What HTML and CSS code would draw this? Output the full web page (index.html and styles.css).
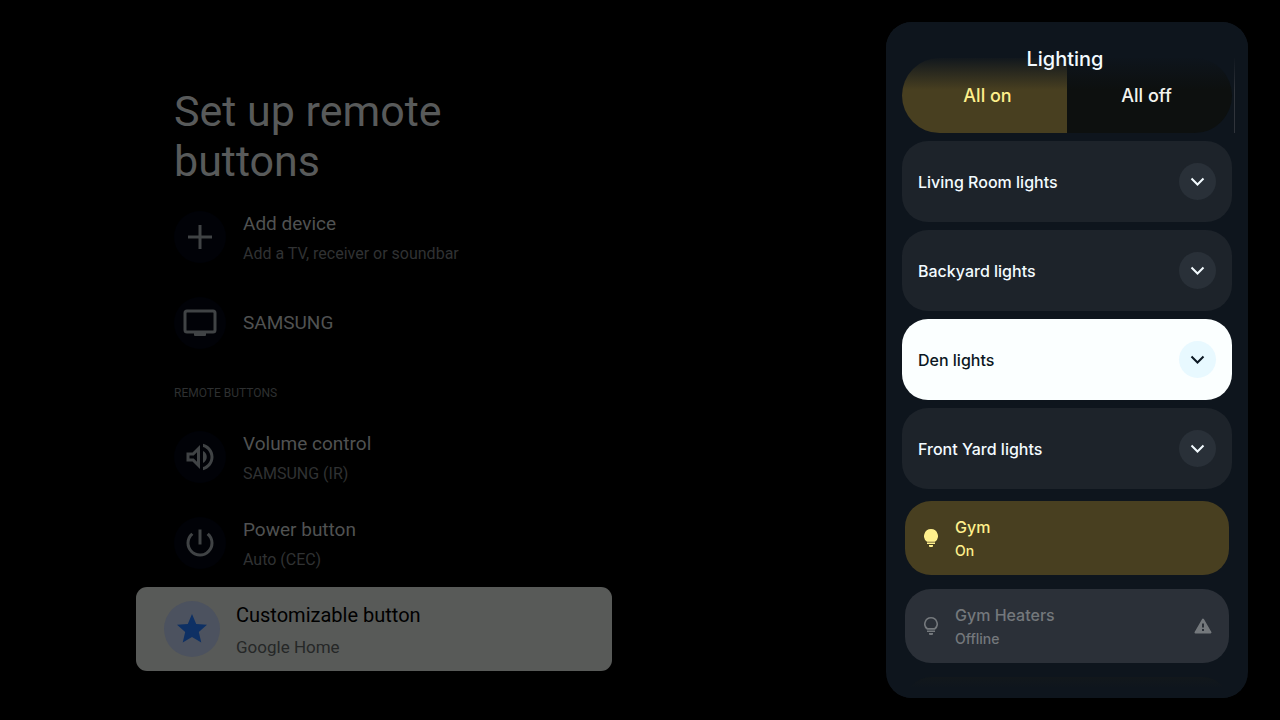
FILE: index.html
```html
<!DOCTYPE html>
<html lang="en">
<head>
    <meta charset="UTF-8">
    <meta name="viewport" content="width=device-width, initial-scale=1.0">
    <title>Set up remote buttons</title>
    <link rel="stylesheet" href="styles.css">
</head>
<body>
    <main class="setup">
        <h1 class="setup-title">Set up remote buttons</h1>

        <button class="setup-row">
            <span class="setup-icon">
                <svg width="24" height="24" viewBox="0 0 24 24" fill="none" stroke="currentColor" stroke-width="3"><path d="M12 0v24M0 12h24"/></svg>
            </span>
            <span class="setup-text">
                <span class="setup-label">Add device</span>
                <span class="setup-sub">Add a TV, receiver or soundbar</span>
            </span>
        </button>
        <button class="setup-row">
            <span class="setup-icon">
                <svg width="34" height="28" viewBox="0 0 34 28"><rect x="2" y="2" width="30" height="21" rx="2" fill="none" stroke="currentColor" stroke-width="3"/><path d="M11 23h12v3q0 1-1 1H12q-1 0-1-1z" fill="currentColor"/></svg>
            </span>
            <span class="setup-text">
                <span class="setup-label">SAMSUNG</span>
            </span>
        </button>

        <h2 class="setup-category">REMOTE BUTTONS</h2>

        <button class="setup-row">
            <span class="setup-icon">
                <svg width="36" height="36" viewBox="0 0 24 24" fill="currentColor"><path d="M3 9v6h4l5 5V4L7 9H3zm7-.17v6.34L7.83 13H5v-2h2.83L10 8.83zM16.5 12A4.5 4.5 0 0 0 14 7.97v8.05c1.48-.73 2.5-2.25 2.5-4.02zM14 3.23v2.06c2.89.86 5 3.54 5 6.71s-2.11 5.85-5 6.71v2.06c4.01-.91 7-4.49 7-8.77s-2.99-7.86-7-8.77z"/></svg>
            </span>
            <span class="setup-text">
                <span class="setup-label">Volume control</span>
                <span class="setup-sub">SAMSUNG (IR)</span>
            </span>
        </button>
        <button class="setup-row">
            <span class="setup-icon">
                <svg width="36" height="36" viewBox="0 0 24 24" fill="currentColor"><path d="M13 3h-2v10h2V3zm4.83 2.17l-1.42 1.42A6.92 6.92 0 0 1 19 12a7 7 0 1 1-11.42-5.42L6.17 5.17A8.93 8.93 0 0 0 3 12a9 9 0 0 0 18 0c0-2.74-1.23-5.18-3.17-6.83z"/></svg>
            </span>
            <span class="setup-text">
                <span class="setup-label">Power button</span>
                <span class="setup-sub">Auto (CEC)</span>
            </span>
        </button>
        <button class="setup-row selected">
            <span class="setup-icon">
                <svg width="36" height="36" viewBox="0 0 24 24" fill="currentColor"><path d="M12 17.27L18.18 21l-1.64-7.03L22 9.24l-7.19-.61L12 2 9.19 8.63 2 9.24l5.46 4.73L5.82 21z"/></svg>
            </span>
            <span class="setup-text">
                <span class="setup-label">Customizable button</span>
                <span class="setup-sub">Google Home</span>
            </span>
        </button>
    </main>

    <aside class="panel">
        <header class="panel-header">
            <h2 class="panel-title">Lighting</h2>
        </header>

        <div class="panel-list">
            <div class="all-row">
                <button class="all-btn all-on">All on</button>
                <button class="all-btn all-off">All off</button>
            </div>

            <button class="room">
                Living Room lights
                <span class="room-arrow"><svg width="15" height="9" viewBox="0 0 15 9"><path d="M1.5 1.5l6 6 6-6"/></svg></span>
            </button>
            <button class="room">
                Backyard lights
                <span class="room-arrow"><svg width="15" height="9" viewBox="0 0 15 9"><path d="M1.5 1.5l6 6 6-6"/></svg></span>
            </button>
            <button class="room focused">
                Den lights
                <span class="room-arrow"><svg width="15" height="9" viewBox="0 0 15 9"><path d="M1.5 1.5l6 6 6-6"/></svg></span>
            </button>
            <button class="room">
                Front Yard lights
                <span class="room-arrow"><svg width="15" height="9" viewBox="0 0 15 9"><path d="M1.5 1.5l6 6 6-6"/></svg></span>
            </button>

            <div class="devices">
                <button class="device on">
                    <svg width="14" height="18" viewBox="0 0 14 18" fill="currentColor"><path d="M7 0a7 7 0 0 0-4 12.7h8A7 7 0 0 0 7 0z"/><path d="M3 13.5h8V15H3zM5 16h4v1q0 1-1 1H6q-1 0-1-1z"/></svg>
                    <span class="device-text">
                        <span>Gym</span>
                        <span class="device-state">On</span>
                    </span>
                </button>
                <button class="device offline">
                    <svg width="14" height="18" viewBox="0 0 14 18" fill="currentColor"><path d="M7 0a7 7 0 0 0-4 12.7h8A7 7 0 0 0 7 0zm0 1.6a5.3 5.3 0 0 1 3.3 9.5H3.7A5.3 5.3 0 0 1 7 1.6z" fill-rule="evenodd"/><path d="M3 13.5h8V15H3zM5 16h4v1q0 1-1 1H6q-1 0-1-1z"/></svg>
                    <span class="device-text">
                        <span>Gym Heaters</span>
                        <span class="device-state">Offline</span>
                    </span>
                    <svg class="device-warning" width="18" height="16" viewBox="0 0 18 16"><path d="M9 1.5L16.500 14.500h-15z" fill="currentColor" stroke="currentColor" stroke-width="2" stroke-linejoin="round"/><path d="M8 5.500h2v4H8zM8 11h2v2H8z" fill="#2b3038"/></svg>
                </button>
                <button class="device" aria-label="More"></button>
            </div>
        </div>
    </aside>
</body>
</html>
```
FILE: styles.css
```css
* {
    box-sizing: border-box;
}

body {
    margin: 0;
    height: 100vh;
    display: flex;
    justify-content: space-between;
    background-color: #000;
    font-family: Roboto, sans-serif;
    overflow: hidden;
}

button {
    border: none;
    background: none;
    padding: 0;
    font: inherit;
    color: inherit;
    text-align: left;
    cursor: pointer;
}

svg {
    display: block;
    flex-shrink: 0;
}

/* Setup list */
.setup {
    width: 476px;
    margin-left: 136px;
    padding-top: 86px;
}

.setup-title {
    max-width: 320px;
    margin: 0 0 8px 38px;
    font-size: 43px;
    line-height: 50px;
    font-weight: 400;
    color: #585a5a;
}

.setup-row {
    display: flex;
    align-items: center;
    gap: 17px;
    width: 100%;
    height: 86px;
    padding-left: 38px;
    color: #505252;
}

.setup-icon {
    display: flex;
    align-items: center;
    justify-content: center;
    flex-shrink: 0;
    width: 52px;
    height: 52px;
    border-radius: 50%;
    background-color: #010207;
    color: #404345;
}

.setup-text {
    display: flex;
    flex-direction: column;
}

.setup-label {
    font-size: 19px;
    line-height: 34px;
}

.setup-sub {
    font-size: 16px;
    line-height: 26px;
    color: #303233;
}

.setup-category {
    margin: 0 0 0 38px;
    padding-top: 6px;
    font-size: 12px;
    line-height: 42px;
    font-weight: 400;
    color: #2e3031;
}

.selected {
    height: 84px;
    margin-top: 1px;
    padding-left: 28px;
    gap: 16px;
    border-radius: 11px;
    background-color: #585a58;
    color: #000;
}

.selected .setup-icon {
    width: 56px;
    height: 56px;
    background-color: #4c525f;
    color: #0e3064;
}

.selected .setup-label {
    font-size: 20px;
    line-height: 36px;
}

.selected .setup-sub {
    font-size: 17px;
    line-height: 28px;
    color: #252727;
}

/* Lighting panel */
.panel {
    position: relative;
    display: flex;
    flex-direction: column;
    width: 362px;
    margin: 22px 32px 22px 0;
    padding-bottom: 10px;
    border-radius: 26px;
    background-color: #0e151d;
    color: #f3fbff;
    font-family: Inter, sans-serif;
    font-weight: 500;
    overflow: hidden;
}

.panel-header {
    position: absolute;
    top: 0;
    left: 0;
    right: 0;
    height: 70px;
    background: linear-gradient(#0e151d 34px, rgba(14, 21, 29, 0) 68px);
    pointer-events: none;
}

.panel-title {
    margin: 0;
    padding-top: 22px;
    padding-right: 4px;
    font-size: 20px;
    line-height: 30px;
    font-weight: 500;
    text-align: center;
}

.panel-list {
    display: flex;
    flex-direction: column;
    gap: 8px;
    flex: 1;
    min-height: 0;
    padding: 36px 16px 0;
    overflow: hidden;
}

/* fades the card that is scrolled past the bottom edge */
.panel::after {
    content: "";
    position: absolute;
    left: 0;
    right: 0;
    bottom: 0;
    height: 24px;
    background: linear-gradient(rgba(14, 21, 29, 0), #0e151d 14px);
    pointer-events: none;
}

.all-row {
    display: flex;
    flex-shrink: 0;
    height: 75px;
    margin-right: -3px;
    padding-right: 2px;
    border-right: 1px solid #30343b;
}

.all-btn {
    flex: 1;
    font-size: 18px;
    text-align: center;
}

.all-on {
    padding-left: 6px;
    border-radius: 38px 0 0 38px;
    background-color: #483f20;
    color: #fff08c;
}

.all-off {
    padding-right: 6px;
    border-radius: 0 38px 38px 0;
    background-color: #0d100f;
    color: #f5f5f0;
}

.room {
    display: flex;
    align-items: center;
    justify-content: space-between;
    flex-shrink: 0;
    height: 81px;
    padding: 0 16px;
    border-radius: 26px;
    background-color: #1d232a;
    font-size: 16px;
}

.room-arrow {
    display: flex;
    align-items: center;
    justify-content: center;
    width: 37px;
    height: 37px;
    border-radius: 50%;
    background-color: #293038;
}

.room-arrow path {
    fill: none;
    stroke: currentColor;
    stroke-width: 2;
}

.focused {
    background-color: #fbffff;
    color: #0b1722;
}

.focused .room-arrow {
    background-color: #e8f9ff;
}

.devices {
    display: flex;
    flex-direction: column;
    gap: 14px;
    padding: 4px 3px 0;
}

.device {
    display: flex;
    align-items: center;
    gap: 17px;
    flex-shrink: 0;
    height: 74px;
    padding: 0 17px 0 19px;
    border-radius: 26px;
    background-color: #13181b;
    font-size: 16px;
    line-height: 24px;
}

.device-text {
    display: flex;
    flex-direction: column;
    padding-top: 2px;
}

.device-state {
    font-size: 14px;
}

.device-warning {
    margin-left: auto;
}

.on {
    background-color: #483f20;
    color: #fff08c;
}

.offline {
    background-color: #2b3038;
    color: #74787c;
}
```
